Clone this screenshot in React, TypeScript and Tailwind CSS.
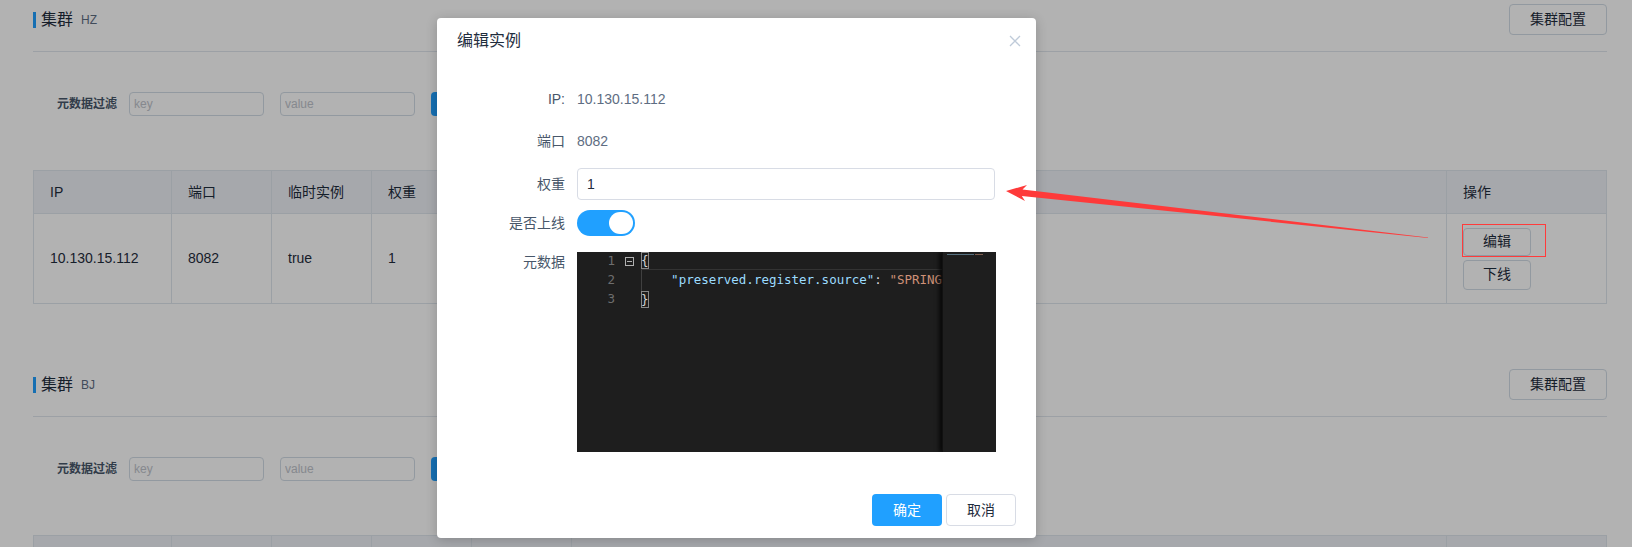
import React from 'react';

const sans = "font-['Liberation_Sans','Noto_Sans_CJK_SC',sans-serif]";
const mono = "font-['DejaVu_Sans_Mono','Liberation_Mono',monospace]";

const Section = ({ name }: { name: string }) => {
    return (
        <div className="h-[365px] pt-[4px]">
            <div className="flex h-[31px] items-center justify-between">
                <div className="flex items-center">
                    <span className="h-[16px] w-[3px] bg-[#20a0ff]" />
                    <span className="ml-[5px] text-[16px] leading-none text-[#1f2d3d]">集群</span>
                    <span className="ml-2 text-[12px] leading-none text-[#5e6d82]">{name}</span>
                </div>
                <button className="h-[31px] w-[98px] rounded-[4px] border border-[#d1dbe5] bg-white text-[14px] text-[#1f2d3d]">
                    集群配置
                </button>
            </div>
            <div className="mt-[16px] border-b border-[#e0e6ed]" />

            <div className="mt-[40px] flex h-[24px] items-center pl-[24px]">
                <span className="w-[60px] text-[12px] font-semibold text-[#48576a]">元数据过滤</span>
                <input
                    placeholder="key"
                    className="ml-[12px] h-[24px] w-[135px] rounded-[4px] border border-[#d1dbe5] px-[4px] text-[12px] placeholder-[#c0c4cc] outline-none"
                />
                <input
                    placeholder="value"
                    className="ml-[16px] h-[24px] w-[135px] rounded-[4px] border border-[#d1dbe5] px-[4px] text-[12px] placeholder-[#c0c4cc] outline-none"
                />
                <button className="ml-[16px] h-[24px] w-[60px] rounded-[4px] bg-[#20a0ff] text-[12px] text-white">查询</button>
            </div>

            <table className="mt-[54px] w-full table-fixed border-collapse text-[14px] text-[#1f2d3d]">
                <colgroup>
                    <col className="w-[138px]" />
                    <col className="w-[100px]" />
                    <col className="w-[100px]" />
                    <col className="w-[100px]" />
                    <col className="w-[100px]" />
                    <col />
                    <col className="w-[160px]" />
                </colgroup>
                <thead>
                    <tr className="h-[43px] bg-[#eef1f6]">
                        {['IP', '端口', '临时实例', '权重', '健康状态', '元数据', '操作'].map((h) => (
                            <th key={h} className="border border-[#dfe6ec] pl-4 text-left font-normal">
                                {h}
                            </th>
                        ))}
                    </tr>
                </thead>
                <tbody>
                    <tr className="h-[90px] bg-white">
                        <td className="border border-[#dfe6ec] pl-4">10.130.15.112</td>
                        <td className="border border-[#dfe6ec] pl-4">8082</td>
                        <td className="border border-[#dfe6ec] pl-4">true</td>
                        <td className="border border-[#dfe6ec] pl-4">1</td>
                        <td className="border border-[#dfe6ec] pl-4">true</td>
                        <td className="border border-[#dfe6ec] pl-4 text-[12px]">{'{"preserved.register.source":"SPRING_CLOUD"}'}</td>
                        <td className="border border-[#dfe6ec] pl-4">
                            <div className="flex flex-col items-start gap-[4px]">
                                <button className="h-[28px] w-[68px] rounded-[4px] border border-[#d1dbe5] bg-white text-[14px]">编辑</button>
                                <button className="h-[30px] w-[68px] rounded-[4px] border border-[#d1dbe5] bg-white text-[14px]">下线</button>
                            </div>
                        </td>
                    </tr>
                </tbody>
            </table>
        </div>
    );
};

const Editor = () => {
    const rows = [1, 2, 3];
    return (
        <div className={`flex h-[200px] w-[419px] overflow-hidden bg-[#1e1e1e] ${mono} text-[12.5px]`}>
            <div className="w-[64px] shrink-0">
                {rows.map((n) => (
                    <div key={n} className="flex h-[19px] items-center">
                        <span className="w-[40px] pr-[2px] text-right text-[#6e6e6e]">{n}</span>
                        <span className="flex w-[24px] justify-center">
                            {n === 1 && (
                                <svg width="9" height="9" viewBox="0 0 9 9">
                                    <rect x="0.5" y="0.5" width="8" height="8" fill="none" stroke="#b0b0b0" />
                                    <line x1="2" y1="4.5" x2="7" y2="4.5" stroke="#b0b0b0" />
                                </svg>
                            )}
                        </span>
                    </div>
                ))}
            </div>
            <div className="relative min-w-0 flex-1 overflow-hidden whitespace-pre text-[#d4d4d4]">
                <div className="absolute left-0 right-0 top-0 h-[18px] border-b border-[#333]" />
                <div className="absolute left-0 top-[18px] h-[21px] w-px bg-[#404040]" />
                <div className="relative flex h-[19px] items-start">
                    <span className="h-[17px] leading-[17px] outline outline-1 -outline-offset-1 outline-[#888]">{'{'}</span>
                </div>
                <div className="relative flex h-[19px] items-center">
                    <span>{'    '}</span>
                    <span className="text-[#9cdcfe]">"preserved.register.source"</span>
                    <span>: </span>
                    <span className="text-[#ce9178]">"SPRING_CLOUD"</span>
                </div>
                <div className="relative flex h-[19px] items-center">
                    <span className="h-[17px] leading-[17px] outline outline-1 -outline-offset-1 outline-[#888]">{'}'}</span>
                </div>
            </div>
            <div className="relative w-[54px] shrink-0 border-l border-[#111] bg-[#1e1e1e] shadow-[-3px_0_4px_rgba(0,0,0,0.7)]">
                <div className="absolute left-[4px] top-[2px] flex h-px">
                    <span className="w-[27px] bg-[#56707f]" />
                    <span className="ml-[1px] w-[8px] bg-[#7d5d4e]" />
                </div>
            </div>
        </div>
    );
};

const Row = ({ label, children, className }: { label: string; children: React.ReactNode; className: string }) => (
    <div className={`flex ${className}`}>
        <div className="w-[140px] shrink-0 pr-3 text-right text-[14px] text-[#48576a]">{label}</div>
        <div className="flex items-center">{children}</div>
    </div>
);

const App = () => {
    return (
        <div className={`relative h-[547px] w-[1632px] overflow-hidden bg-white ${sans}`}>
            <div className="pl-[33px] pr-[25px]">
                <Section name="HZ" />
                <Section name="BJ" />
            </div>

            <div className="absolute inset-0 bg-black/30" />

            <div className="absolute left-[437px] top-[18px] w-[599px] rounded-[4px] bg-white shadow-[0_2px_12px_rgba(0,0,0,0.2)]">
                <div className="flex h-[46px] items-center justify-between pl-5 pr-[15px]">
                    <span className="text-[16px] text-[#1f2d3d]">编辑实例</span>
                    <svg width="12" height="12" viewBox="0 0 12 12">
                        <path d="M1 1L11 11M11 1L1 11" stroke="#bfcbd9" strokeWidth="1.3" />
                    </svg>
                </div>
                <div className="pt-[14px]">
                    <Row label="IP:" className="h-[42px] items-center">
                        <span className="text-[14px] text-[#5e6d82]">10.130.15.112</span>
                    </Row>
                    <Row label="端口" className="h-[42px] items-center">
                        <span className="text-[14px] text-[#5e6d82]">8082</span>
                    </Row>
                    <Row label="权重" className="mt-[6px] h-[32px] items-center">
                        <input
                            defaultValue="1"
                            className="h-[32px] w-[418px] rounded-[4px] border border-[#d8dce5] px-[9px] text-[14px] text-[#1f2d3d] outline-none"
                        />
                    </Row>
                    <Row label="是否上线" className="mt-[10px] h-[26px] items-center">
                        <span className="flex h-[26px] w-[58px] items-center justify-end rounded-full bg-[#20a0ff] pr-[2px]">
                            <span className="h-[22px] w-[24px] rounded-full bg-white" />
                        </span>
                    </Row>
                    <Row label="元数据" className="mt-[16px] items-start">
                        <Editor />
                    </Row>
                </div>
                <div className="mt-[42px] flex justify-end gap-[4px] pb-[12px] pr-[20px]">
                    <button className="h-[32px] w-[70px] rounded-[4px] bg-[#20a0ff] text-[14px] text-white">确定</button>
                    <button className="h-[32px] w-[70px] rounded-[4px] border border-[#d8dce5] bg-white text-[14px] text-[#1f2d3d]">取消</button>
                </div>
            </div>

            <div className="absolute left-[1462px] top-[224px] h-[33px] w-[84px] border border-[#ff3b3b]" />

            <svg className="pointer-events-none absolute left-0 top-0" width="1632" height="547">
                <polygon
                    points="1006,191 1027,185 1022.5,189.6 1428,237.4 1428,238 1021.8,196 1025,201"
                    fill="#fe3a3a"
                />
            </svg>
        </div>
    );
};

export default App;
